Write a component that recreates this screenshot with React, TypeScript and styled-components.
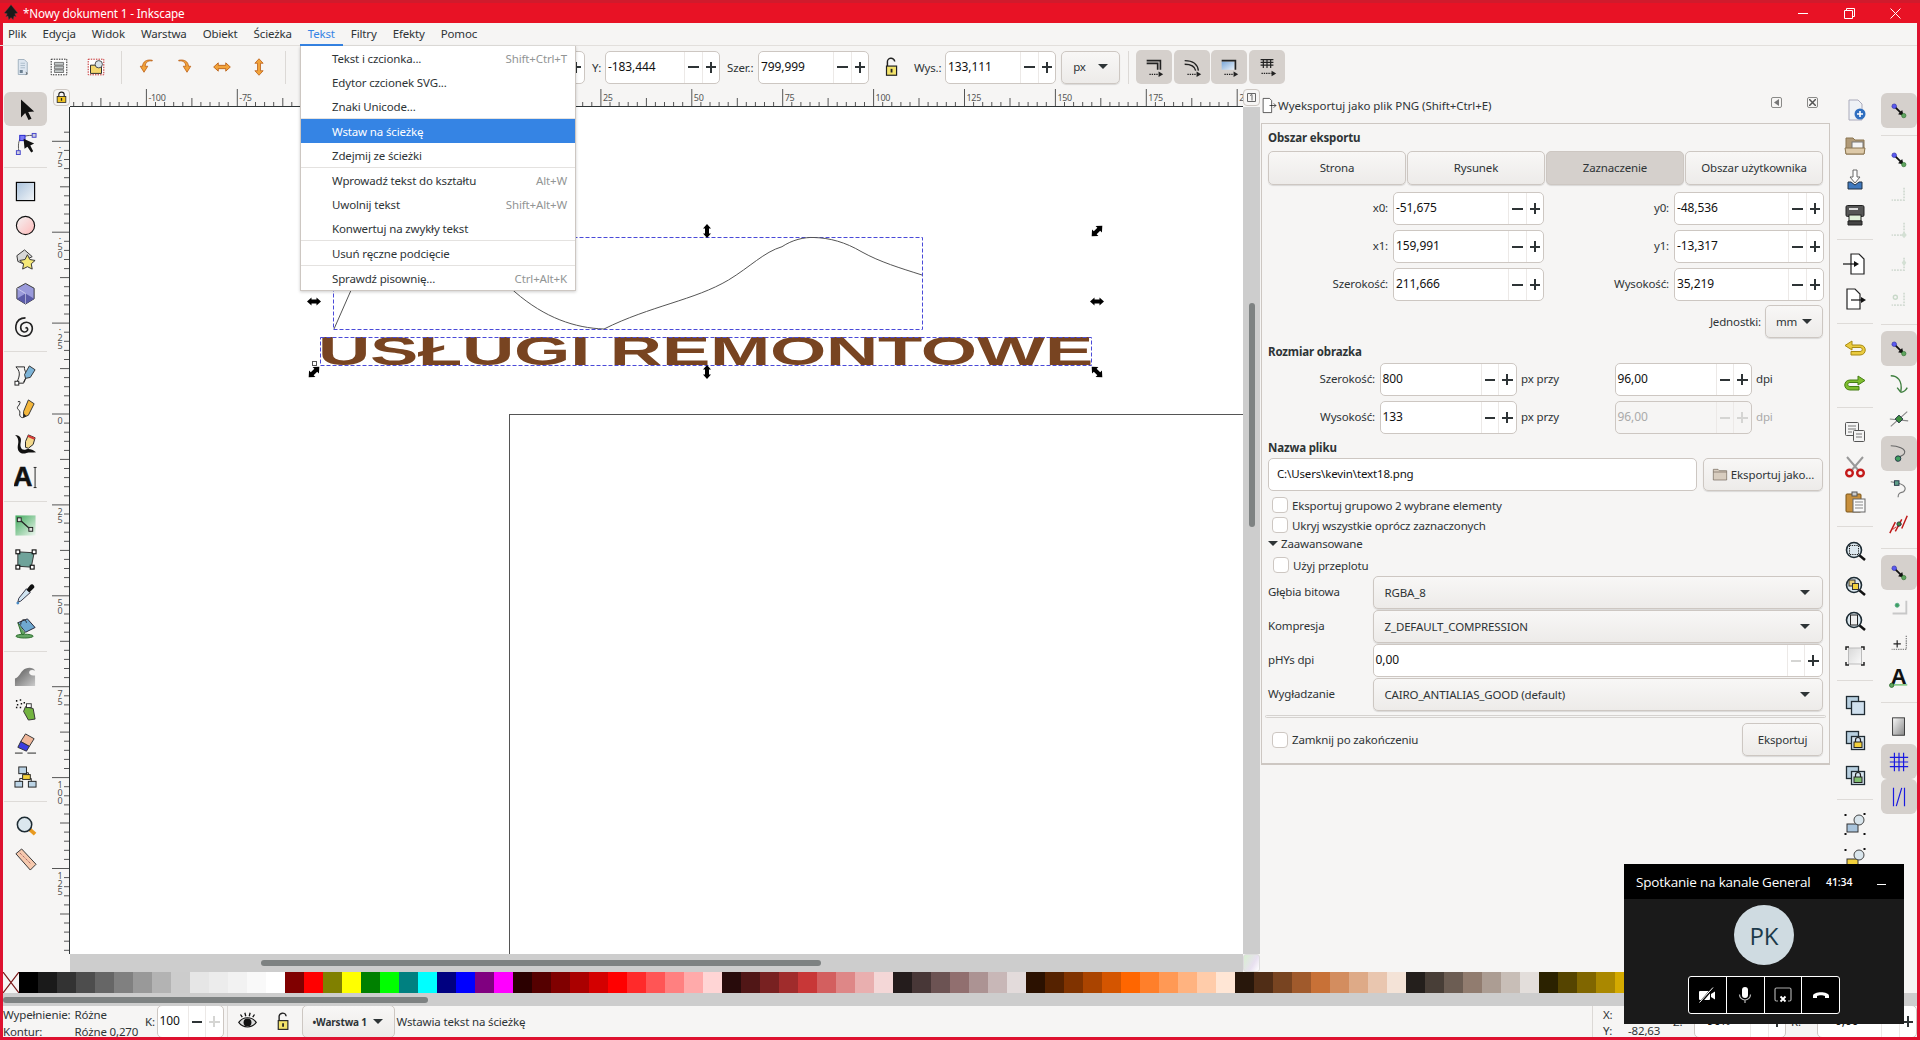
import React, { ReactNode } from 'react';
import styled, { createGlobalStyle } from 'styled-components';

const UI_FONT = `"Noto Sans", "Open Sans", sans-serif`;

const GlobalStyle = createGlobalStyle`
  html, body {
    margin: 0;
    padding: 0;
    width: 1920px;
    height: 1040px;
    overflow: hidden;
    background: #f6f5f4;
  }
  * { box-sizing: border-box; }
`;

const Window = styled.div`
  position: relative;
  width: 1920px;
  height: 1040px;
  display: flex;
  flex-direction: column;
  overflow: hidden;
  background: #f6f5f4;
  color: #2e3436;
  font-family: ${UI_FONT};
  font-size: 11.5px;
  letter-spacing: -0.15px;
`;

const TitleBar = styled.div`
  height: 23px;
  flex: none;
  display: flex;
  align-items: center;
  background: #e81225;
  border-top: 3px solid #d01a2c;
  color: #fff;
  padding: 0 2px;
  font-size: 11.7px;
`;

const TitleText = styled.span`
  margin-left: 3px;
  flex: 1;
`;

const WinControl = styled.div`
  width: 46px;
  display: flex;
  justify-content: center;
`;

const Frame = styled.div`
  flex: 1;
  min-height: 0;
  display: flex;
  flex-direction: column;
  border: 3px solid #de1230;
  border-top: 0;
`;

const MenuBar = styled.div`
  height: 23px;
  flex: none;
  display: flex;
  margin-left: -3px;
  border-bottom: 1px solid #e2dfdc;
`;

const MenuTitle = styled.div<{ $active?: boolean }>`
  padding: 0 8px;
  line-height: 21px;
  height: 23px;
  color: ${(p) => (p.$active ? '#3584e4' : '#2e3436')};
  border-bottom: 2px solid ${(p) => (p.$active ? '#3584e4' : 'transparent')};
`;

const Toolbar = styled.div`
  height: 43px;
  flex: none;
  display: flex;
  align-items: center;
  padding-bottom: 1px;
`;

const TopTool = styled.div<{ $w?: number }>`
  width: ${(p) => p.$w ?? 37}px;
  height: 33px;
  flex: none;
  display: flex;
  align-items: center;
  justify-content: center;
`;

const ToolSep = styled.div<{ $ml?: number; $mr?: number }>`
  width: 1px;
  height: 33px;
  flex: none;
  margin: 0 ${(p) => p.$mr ?? 0}px 0 ${(p) => p.$ml ?? 0}px;
  background: #dcd9d6;
`;

const FieldLabel = styled.span<{ $w: number; $pl?: number }>`
  width: ${(p) => p.$w}px;
  padding-left: ${(p) => p.$pl ?? 0}px;
  flex: none;
  white-space: nowrap;
`;

const Spin = styled.div<{ $w?: number; $h?: number; $disabled?: boolean }>`
  width: ${(p) => (p.$w ? `${p.$w}px` : 'auto')};
  height: ${(p) => p.$h ?? 33}px;
  flex: none;
  display: flex;
  border: 1px solid #cdc7c2;
  border-radius: 5px;
  color: ${(p) => (p.$disabled ? '#aaa' : '#111')};
  background: ${(p) => (p.$disabled ? '#f6f5f4' : '#fff')};
`;

const SpinValue = styled.div<{ $pad?: number }>`
  flex: 1;
  padding-left: ${(p) => p.$pad ?? 2}px;
  line-height: 30px;
  font-size: 12px;
  letter-spacing: -0.1px;
  white-space: nowrap;
  overflow: hidden;
`;

const SpinBtn = styled.div<{ $plus?: boolean; $off?: boolean }>`
  position: relative;
  width: 17.5px;
  flex: none;
  border-left: 1px solid #ece9e7;
  &::before {
    content: '';
    position: absolute;
    left: 3px;
    right: 3px;
    top: 50%;
    height: 2px;
    margin-top: -1px;
    background: ${(p) => (p.$off ? '#d5d5d3' : '#2e3436')};
  }
  &::after {
    content: '';
    display: ${(p) => (p.$plus ? 'block' : 'none')};
    position: absolute;
    top: 50%;
    left: 50%;
    width: 2px;
    height: 11px;
    margin: -5.5px 0 0 -1px;
    background: ${(p) => (p.$off ? '#d5d5d3' : '#2e3436')};
  }
`;

const Button = styled.div<{ $w?: number; $on?: boolean; $ml?: number; $gap?: number }>`
  width: ${(p) => (p.$w ? `${p.$w}px` : 'auto')};
  height: 33px;
  flex: ${(p) => (p.$w ? 'none' : '1')};
  margin-left: ${(p) => p.$ml ?? 0}px;
  padding-bottom: 1px;
  display: flex;
  align-items: center;
  justify-content: center;
  gap: ${(p) => p.$gap ?? 3}px;
  border: 1px solid #cdc7c2;
  border-radius: 5px;
  background: ${(p) => (p.$on ? '#d5d0cc' : 'linear-gradient(#f8f7f6, #edebe9)')};
  box-shadow: 0 1px 1px rgba(0, 0, 0, 0.12);
  white-space: nowrap;
`;

const Arrow = styled.span<{ $ml?: number }>`
  width: 0;
  height: 0;
  margin-left: ${(p) => p.$ml ?? 0}px;
  border-left: 5px solid transparent;
  border-right: 5px solid transparent;
  border-top: 5px solid #2e3436;
`;

const ToggleBtn = styled.div`
  width: 36px;
  height: 34px;
  flex: none;
  margin-right: 1.5px;
  display: flex;
  align-items: center;
  justify-content: center;
  border-radius: 5px;
  background: #d5d0cc;
`;

const Workspace = styled.div`
  height: 883px;
  flex: none;
  display: flex;
`;

const ToolColumn = styled.div<{ $w: number; $top: number; $left?: boolean }>`
  width: ${(p) => p.$w}px;
  flex: none;
  padding-top: ${(p) => p.$top}px;
  padding-left: ${(p) => (p.$left ? 1 : 0)}px;
  display: flex;
  flex-direction: column;
  align-items: ${(p) => (p.$left ? 'flex-start' : 'center')};
`;

const ToolCell = styled.div<{ $w?: number; $h?: number; $on?: boolean }>`
  width: ${(p) => p.$w ?? 43}px;
  height: ${(p) => p.$h ?? 34}px;
  flex: none;
  display: flex;
  align-items: center;
  justify-content: center;
  border-radius: 6px;
  background: ${(p) => (p.$on ? '#d5d0cc' : 'transparent')};
`;

const ToolDivider = styled.div<{ $w?: number; $h?: number }>`
  width: ${(p) => p.$w ?? 43}px;
  height: ${(p) => p.$h ?? 14}px;
  flex: none;
  display: flex;
  align-items: center;
  &::before {
    content: '';
    width: 100%;
    height: 1px;
    background: #dedbd8;
  }
`;

const CanvasArea = styled.div`
  width: 1208px;
  flex: none;
  display: grid;
  grid-template-columns: 18px 1173px 17px;
  grid-template-rows: 18px 847px 18px;
`;

const LockCell = styled.div`
  display: flex;
  align-items: center;
  justify-content: center;
  margin: 0 0 1px 1px;
  border: 1px solid #cdc7c2;
  border-radius: 4px;
`;

const RulerBox = styled.div`
  overflow: hidden;
  svg { display: block; }
`;

const PageCell = styled.div`
  margin: 0 0 1px 0;
  display: flex;
  align-items: center;
  justify-content: center;
  border: 1px solid #cdc7c2;
  border-radius: 4px;
`;

const Canvas = styled.div`
  position: relative;
  background: #fff;
  overflow: hidden;
`;

const PageOutline = styled.div`
  position: absolute;
  left: 439px;
  top: 307px;
  right: 0;
  bottom: 0;
  border-left: 1px solid #555;
  border-top: 1px solid #555;
`;

const Drawing = styled.svg`
  position: absolute;
  left: 0;
  top: 0;
`;

const VScroll = styled.div`
  background: #cdcdcd;
  padding: 196px 0 0 6px;
`;

const VThumb = styled.div`
  width: 6px;
  height: 224px;
  border-radius: 3px;
  background: #7e8282;
`;

const GridBlank = styled.div``;

const HScroll = styled.div`
  background: #cdcdcd;
  padding: 6px 0 0 191px;
`;

const HThumb = styled.div<{ $w: number }>`
  width: ${(p) => p.$w}px;
  height: 6px;
  border-radius: 3px;
  background: #7e8282;
`;

const ColorCorner = styled.div`
  background: linear-gradient(120deg, #d8f0d0, #e8e0f0 60%, #fff);
  border: 1px solid #ddd;
  border-radius: 3px;
`;

const Dock = styled.div`
  width: 570px;
  flex: none;
  display: flex;
  flex-direction: column;
`;

const DockTitle = styled.div`
  height: 34px;
  flex: none;
  display: flex;
  align-items: center;
  padding: 0 10px 2px 1px;
  letter-spacing: -0.05px;
`;

const DockTitleText = styled.span`
  flex: 1;
`;

const DockMini = styled.div<{ $mr?: number }>`
  width: 11px;
  height: 11px;
  flex: none;
  margin: -6px ${(p) => p.$mr ?? 0}px 0 0;
  border: 1px solid #8a8a88;
  border-radius: 2px;
  display: flex;
  align-items: center;
  justify-content: center;
`;

const DockBox = styled.div`
  height: 642px;
  flex: none;
  margin-left: 1px;
  padding: 6px 6px 0 6px;
  border: 1px solid #cdc7c2;
  border-bottom: 2px solid #cdc7c2;
`;

const Heading = styled.div<{ $mt?: number }>`
  height: 16px;
  line-height: 16px;
  margin-top: ${(p) => p.$mt ?? 0}px;
  font-weight: 700;
`;

const SegmentRow = styled.div`
  display: flex;
  gap: 1px;
  margin-top: 5px;
  height: 34px;
  ${Button} {
    height: 34px;
  }
`;

const CoordGrid = styled.div`
  display: grid;
  grid-template-columns: 120px 151px 120px 150px;
  column-gap: 5px;
  row-gap: 5px;
  margin-top: 7px;
`;

const RightLabel = styled.div<{ $dim?: boolean }>`
  text-align: right;
  line-height: 32px;
  color: ${(p) => (p.$dim ? '#aaa' : '#2e3436')};
`;

const UnitsRow = styled.div`
  display: flex;
  align-items: center;
  justify-content: flex-end;
  gap: 4px;
  margin-top: 4px;
`;

const SizeGrid = styled.div`
  display: grid;
  grid-template-columns: 107px 137px 89px 137px auto;
  column-gap: 4.5px;
  row-gap: 5px;
  margin-top: 3px;
`;

const LeftLabel = styled.div<{ $dim?: boolean }>`
  line-height: 32px;
  color: ${(p) => (p.$dim ? '#aaa' : '#2e3436')};
`;

const FileRow = styled.div`
  display: flex;
  gap: 6px;
  margin-top: 2px;
`;

const FileInput = styled.div`
  flex: 1;
  height: 33px;
  padding-left: 8px;
  line-height: 30px;
  background: #fff;
  border: 1px solid #cdc7c2;
  border-radius: 5px;
  color: #111;
`;

const CheckRow = styled.div<{ $mt?: number; $ml?: number }>`
  height: 16px;
  display: flex;
  align-items: center;
  gap: 4px;
  margin: ${(p) => p.$mt ?? 0}px 0 0 ${(p) => p.$ml ?? 4}px;
`;

const CheckBox = styled.span`
  width: 16px;
  height: 16px;
  flex: none;
  background: #fff;
  border: 1px solid #cdc7c2;
  border-radius: 4px;
`;

const Expander = styled.div`
  height: 16px;
  margin-top: 2px;
  display: flex;
  align-items: center;
  gap: 3px;
`;

const OptionGrid = styled.div`
  display: grid;
  grid-template-columns: 104.5px 450px;
  row-gap: 1px;
  margin-top: 3px;
`;

const Select = styled.div`
  height: 33px;
  display: flex;
  align-items: center;
  justify-content: space-between;
  padding: 0 12px 1px 11px;
  border: 1px solid #cdc7c2;
  border-radius: 5px;
  background: linear-gradient(#f8f7f6, #edebe9);
  box-shadow: 0 1px 1px rgba(0, 0, 0, 0.12);
`;

const DockRule = styled.div`
  height: 3px;
  margin: 4px -3px 0 -3px;
  border: 1px solid #d5d2cf;
  border-radius: 2px;
`;

const FinishRow = styled.div`
  display: flex;
  align-items: center;
  justify-content: space-between;
  margin-top: 5px;
  padding-left: 4px;
`;

const Palette = styled.div`
  height: 21px;
  flex: none;
  display: flex;
  overflow: hidden;
`;

const NoColor = styled.div`
  width: 16px;
  flex: none;
  svg { display: block; }
`;

const Swatch = styled.div<{ $c: string }>`
  width: 19px;
  flex: none;
  background: ${(p) => p.$c};
`;

const PaletteScroll = styled.div`
  height: 13px;
  flex: none;
  padding-top: 4px;
  background: #cdcdcd;
`;

const StatusBar = styled.div`
  height: 31px;
  flex: none;
  display: flex;
  align-items: center;
  overflow: hidden;
`;

const StyleInfo = styled.div`
  width: 142px;
  flex: none;
  display: grid;
  grid-template-columns: 71.5px auto;
  line-height: 17px;
  margin-top: 2px;
`;

const StatusSep = styled.div<{ $ml?: number }>`
  width: 1px;
  height: 31px;
  flex: none;
  margin-left: ${(p) => p.$ml ?? 0}px;
  background: #dcd9d6;
`;

const StatusIcon = styled.div<{ $w: number }>`
  width: ${(p) => p.$w}px;
  flex: none;
  display: flex;
  justify-content: center;
`;

const LayerCombo = styled.div`
  width: 93px;
  height: 33px;
  flex: none;
  display: flex;
  align-items: center;
  padding-left: 10px;
  font-size: 10px;
  font-weight: 700;
  border: 1px solid #cdc7c2;
  border-radius: 5px;
  background: linear-gradient(#f8f7f6, #edebe9);
  margin-left: 2px;
`;

const StatusText = styled.div`
  flex: 1;
  padding-left: 2px;
  white-space: nowrap;
`;

const CoordInfo = styled.div`
  width: 80px;
  flex: none;
  display: grid;
  grid-template-columns: 25px auto;
  padding-left: 10px;
  line-height: 16px;
  margin-top: 2px;
`;

const Dropdown = styled.div`
  position: absolute;
  left: 300px;
  top: 46px;
  width: 276px;
  height: 245px;
  background: #fff;
  border: 1px solid #cdc7c2;
  border-top: 0;
  box-shadow: 0 1px 3px rgba(0, 0, 0, 0.2);
`;

const DropItem = styled.div<{ $on?: boolean }>`
  height: 24px;
  display: flex;
  align-items: center;
  justify-content: space-between;
  padding: 0 8px 0 31px;
  background: ${(p) => (p.$on ? '#3584e4' : 'transparent')};
  color: ${(p) => (p.$on ? '#fff' : '#2e3436')};
`;

const Shortcut = styled.span`
  color: #929595;
`;

const DropSep = styled.div`
  height: 1px;
  background: #e4e2e0;
`;

const Meeting = styled.div`
  position: absolute;
  left: 1624px;
  top: 864px;
  width: 280px;
  height: 160px;
  display: flex;
  flex-direction: column;
  background: #1a1a1a;
  color: #fff;
`;

const MeetingHead = styled.div`
  height: 35px;
  flex: none;
  display: flex;
  align-items: center;
  padding-left: 12px;
  background: #000;
  font-family: "Open Sans", sans-serif;
`;

const MeetingTitle = styled.span`
  width: 190px;
  flex: none;
  font-size: 13.5px;
  letter-spacing: -0.2px;
  white-space: nowrap;
`;

const MeetingTime = styled.span`
  font-size: 10.5px;
  font-weight: 600;
  letter-spacing: -0.1px;
`;

const MeetingHide = styled.span`
  width: 9px;
  height: 1px;
  margin: 6px 0 0 25px;
  background: #fff;
`;

const Avatar = styled.div`
  width: 60px;
  height: 60px;
  margin: 6px auto 0;
  border-radius: 50%;
  background: #cfdbe1;
  color: #1c3a4a;
  display: flex;
  align-items: center;
  justify-content: center;
  font-family: "Open Sans", sans-serif;
  font-size: 24px;
  letter-spacing: 0;
`;

const CallBar = styled.div`
  width: 152px;
  height: 38px;
  margin: 11px 0 0 64px;
  display: flex;
  background: #000;
  border: 1px solid #fff;
  border-radius: 3px;
`;

const CallBtn = styled.div`
  flex: 1;
  display: flex;
  align-items: center;
  justify-content: center;
  & + & { border-left: 1px solid #fff; }
`;

const Ico = ({ children, s = 24 }: { children: ReactNode; s?: number }) => (
  <svg width={s} height={s} viewBox="0 0 24 24">{children}</svg>
);

const grad = (id: string, a: string, b: string) => (
  <defs>
    <linearGradient id={id} x1="0" y1="0" x2="1" y2="1">
      <stop offset="0" stopColor={a} />
      <stop offset="1" stopColor={b} />
    </linearGradient>
  </defs>
);

const Magnifier = () => <circle cx="11" cy="11" r="7.5" fill="#dbe7ee" stroke="#1d2b33" strokeWidth="1.6" />;

const DocShape = ({ x = 0 }: { x?: number }) => (
  <path transform={`translate(${x} 0)`} d="M6 2h8l5 5v15H6z" fill="#fff" stroke="#222" strokeWidth="1.2" />
);

const Flat = ({ d, f, s }: { d: string; f: string; s: string }) => <path d={d} fill={f} stroke={s} strokeWidth="1" strokeLinejoin="round" />;

const NodeArrow = () => (
  <>
    <path d="M7 7l8.5 8.5" stroke="#111" strokeWidth="2" />
    <path d="M17 17l-6-1.5 4.500-4.500z" fill="#111" />
    <circle cx="6.800" cy="6.800" r="2.500" fill="#5a5af0" stroke="#3030a0" strokeWidth="0.7" />
    <circle cx="17.200" cy="17" r="2.400" fill="#5fa45f" stroke="#2f6f2f" strokeWidth="0.7" />
  </>
);

const FaintBox = ({ extra }: { extra?: ReactNode }) => (
  <>
    <path d="M17.5 4v13.5H4" fill="none" stroke="#d4dcd4" strokeWidth="2" strokeDasharray="2 1.2" />
    {extra}
  </>
);

const Sheets = ({ front = '#cfe0ee', extra }: { front?: string; extra?: ReactNode }) => (
  <>
    <rect x="3.5" y="3.5" width="12" height="12" fill="#b7cfe0" stroke="#1f2b33" strokeWidth="1.3" />
    <rect x="8.5" y="8.5" width="13" height="13" fill={front} stroke="#1f2b33" strokeWidth="1.3" />
    {extra}
  </>
);

const MiniLock = ({ c }: { c: string }) => (
  <>
    <path d="M12.5 14v-2a2.5 2.5 0 0 1 5 0v2" fill="none" stroke="#222" strokeWidth="1.2" />
    <rect x="11" y="14" width="8" height="5.5" fill={c} stroke="#222" strokeWidth="1" />
  </>
);

const icons: Record<string, ReactNode> = {
  logo: <path d="M12 1l4 5 5 6-4 1 2 4-3-1-1 5-3-3-3 3-1-5-3 1 2-4-4-1 5-6z" fill="#1a1a1a" stroke="#555" strokeWidth=".5" />,
  selectAll: (
    <>
      <path d="M7 2h8l4 4v16H7z" fill="#dde6f0" stroke="#8da0b0" />
      <rect x="9" y="16" width="4" height="4" fill="#6b7f90" />
      <path d="M10 7h6M10 10h6M10 13h6" stroke="#9fb2c2" />
      <path d="M17 19l2 1.500-2 1.500" stroke="#333" fill="none" />
    </>
  ),
  selectLayers: (
    <>
      <rect x="3.5" y="3.5" width="17" height="17" fill="#fff" stroke="#111" strokeDasharray="1.6 1.2" />
      <path d="M7 7h10v3H7zM7 11h10v3H7zM7 15h10v3H7z" fill="#c6cccc" stroke="#555" strokeWidth=".8" />
    </>
  ),
  selectSame: (
    <>
      <rect x="3.5" y="3.5" width="17" height="17" fill="#fff" stroke="#c01818" strokeDasharray="1.6 1.2" />
      <path d="M6 10h6l2 2h4v7H6z" fill="#f3d66c" stroke="#222" />
      <circle cx="15" cy="9" r="4" fill="#d7e3ea" stroke="#444" />
    </>
  ),
  rotL: <Flat d="M19 4c-6-1-9 2-9.500 7H13l-5 8-5-8h3C6.500 5 11 1.500 19 3z" f="#f2a33a" s="#b85a10" />,
  rotR: <Flat d="M5 4c6-1 9 2 9.500 7H11l5 8 5-8h-3C17.500 5 13 1.500 5 3z" f="#f2a33a" s="#b85a10" />,
  flipH: <Flat d="M2 12l5.500-5v3h9V7l5.500 5-5.500 5v-3h-9v3z" f="#f2a33a" s="#b85a10" />,
  flipV: <Flat d="M12 1l5.500 6H14v10h3.500L12 23l-5.500-6H10V7H6.500z" f="#f2a33a" s="#b85a10" />,
  lockOpen: (
    <>
      <path d="M7 11V7a4 4 0 0 1 8-1" fill="none" stroke="#222" strokeWidth="1.6" />
      <rect x="6" y="11" width="11" height="10" fill="#f3e36a" stroke="#222" strokeWidth="1.3" />
      <rect x="10.500" y="14" width="2" height="4" fill="#222" />
    </>
  ),
  lockClosed: (
    <>
      <path d="M7 11V7a5 5 0 0 1 10 0v4" fill="none" stroke="#222" strokeWidth="2" />
      <rect x="4" y="10" width="16" height="11" fill="#f3c623" stroke="#222" strokeWidth="1.5" />
      <rect x="10.800" y="13" width="2.400" height="5" fill="#222" />
    </>
  ),
  scale1: (
    <>
      <path d="M4 5h15v10M4 8h12v7" fill="none" stroke="#222" strokeWidth="1.8" />
      <path d="M7 20h10" stroke="#222" strokeWidth="1.3" strokeDasharray="1.5 1" />
      <path d="M22 20l-5-3v6z" fill="#222" />
    </>
  ),
  scale2: (
    <>
      <path d="M4 5c9 0 14 3 15 11M4 9c6 0 11 2 12 7" fill="none" stroke="#222" strokeWidth="1.5" />
      <path d="M7 20h10" stroke="#222" strokeWidth="1.3" strokeDasharray="1.5 1" />
      <path d="M22 20l-5-3v6z" fill="#222" />
    </>
  ),
  scale3: (
    <>
      {grad('sc3', '#7aa7d8', '#e8f0f8')}
      <rect x="4" y="6" width="14" height="9" fill="url(#sc3)" />
      <path d="M4 5h15v10" fill="none" stroke="#222" strokeWidth="1.8" />
      <path d="M7 20h10" stroke="#222" strokeWidth="1.3" strokeDasharray="1.5 1" />
      <path d="M22 20l-5-3v6z" fill="#222" />
    </>
  ),
  scale4: (
    <>
      <path d="M5 4h14M5 7h14M5 10h14M8 4v9M12 4v9M16 4v9" fill="none" stroke="#222" strokeWidth="1.3" />
      <path d="M6 19h11" stroke="#222" strokeWidth="1.3" strokeDasharray="1.5 1" />
      <path d="M22 19l-5-3v6z" fill="#222" />
    </>
  ),
  selector: <path d="M7 2.500v18l4.200-4.500 3.300 7 3-1.300-3.300-6.700 6-.5z" fill="#111" />,
  node: (
    <>
      <path d="M5 20c-1-8 0-13 4-15 3-1 6-1.500 10-1.500" fill="none" stroke="#555" />
      <rect x="6" y="3.500" width="5.500" height="5.500" fill="#7a7af5" stroke="#2222cc" />
      <rect x="19" y="1.500" width="4" height="4" fill="#ccd" stroke="#44c" />
      <rect x="2.500" y="19.500" width="4" height="4" fill="#ccd" stroke="#44c" />
      <path d="M10 7l11 5-4 2 3 6-2 1.500-4-6-3 2z" fill="#111" />
    </>
  ),
  rect: (
    <>
      {grad('rc', '#a9c2dc', '#f2f5f8')}
      <rect x="2.500" y="2.500" width="19" height="19" fill="url(#rc)" stroke="#000" strokeWidth="1.2" />
    </>
  ),
  ellipse: (
    <>
      {grad('el', '#f4f4f4', '#ffb9b9')}
      <circle cx="12" cy="12" r="9.500" fill="url(#el)" stroke="#111" strokeWidth="1.2" />
    </>
  ),
  star: (
    <>
      <path d="M3 8l8-6 8 7-6 3-2 5-7-3z" fill="#d8d8d8" stroke="#333" />
      <path d="M14 7l2.500 5 5.500 1-4 3.500 1 5.500-5-2.500-5 2.500 1-5.500-4-3.500 5.500-1z" fill="#f6e977" stroke="#333" />
    </>
  ),
  box3d: (
    <>
      <path d="M12 1.500l9 5v11l-9 5.500-9-5.500v-11z" fill="#9a9adb" stroke="#333" />
      <path d="M12 12l9 5.500-9 5.500-9-5.500z" fill="#5b5ba8" />
      <path d="M12 12L3 6.500M12 12v11" stroke="#fff" strokeWidth=".5" />
    </>
  ),
  spiral: (
    <path d="M12 13c1-2 3 0 2 2-2 3-7 2-7-3 0-5 6-7 10-4 4 4 2 12-5 13C6 22 1 17 2 10 3 5 7 2 12 2" fill="none" stroke="#222" strokeWidth="1.7" />
  ),
  pen: (
    <>
      <path d="M2 3h9c-1 5 5 6-1 17" fill="none" stroke="#222" />
      <path d="M2 3c4 4 5 8 1 16" fill="none" stroke="#222" />
      <rect x="1" y="18" width="4" height="4" fill="#fff" stroke="#222" />
      <path d="M5 20h5" stroke="#222" />
      <path d="M16 2l6 4-5 8-5 1-1-4z" fill="#7db4d8" stroke="#333" />
      <path d="M12 15l-2 4" stroke="#222" />
    </>
  ),
  pencil: (
    <>
      <path d="M4 4c4-2 2 3 0 5-2 3 3 3 2 7-1 5 5 6 6 2" fill="none" stroke="#222" />
      <path d="M15 2l6 4-6 12-5 2 0-6z" fill="#f4b73c" stroke="#333" />
      <path d="M10 20l0-4 3 3z" fill="#222" />
    </>
  ),
  calli: (
    <>
      <path d="M1 3c6 0 7 4 6 8-1 5 1 9 6 7 3-1 6 0 10 3-4 1-7 0-10 1-6 2-10-2-9-8 1-4 1-8-3-11z" fill="#111" />
      <path d="M15 3l7 3-2 7-5 4-3-1 0-6z" fill="#f3d98b" stroke="#222" />
      <path d="M15 3l7 3-1 2-7-3z" fill="#d63a3a" />
    </>
  ),
  text: (
    <>
      <text x="-1" y="21" fontFamily="Liberation Sans" fontWeight="700" fontSize="28" fill="#111" stroke="#111" strokeWidth=".6">A</text>
      <path d="M20.500 1.500h3M22 1.500v21M20.500 22.500h3" stroke="#222" fill="none" />
    </>
  ),
  gradient: (
    <>
      {grad('gr', '#3fa95c', '#eef6ef')}
      <rect x="1.500" y="1.500" width="21" height="21" fill="url(#gr)" />
      <path d="M6 6l11 10" stroke="#222" strokeWidth="1.3" />
      <rect x="3.500" y="4" width="4" height="4" fill="#ddd" stroke="#222" />
      <rect x="15.500" y="14" width="4" height="4" fill="#ddd" stroke="#222" />
    </>
  ),
  mesh: (
    <>
      <path d="M4 4l17 1-3 15-14-1z" fill="#6fa39a" stroke="#333" />
      <rect x="2" y="2" width="4" height="4" fill="#fff" stroke="#111" strokeWidth="1.2" />
      <rect x="19" y="2" width="4" height="4" fill="#fff" stroke="#111" strokeWidth="1.2" />
      <rect x="2" y="18" width="4" height="4" fill="#fff" stroke="#111" strokeWidth="1.2" />
      <rect x="17" y="18" width="4" height="4" fill="#fff" stroke="#111" strokeWidth="1.2" />
    </>
  ),
  dropper: (
    <>
      <path d="M13 7l4 4-10 9-3 1 1-4z" fill="#cfe3f0" stroke="#334" />
      <path d="M13 8l4-5c2-2 5 1 4 3l-5 5z" fill="#111" />
      <circle cx="4" cy="22" r="1.500" fill="#4a8cc5" />
    </>
  ),
  bucket: (
    <>
      <ellipse cx="11" cy="21" rx="9" ry="2" fill="#63a563" stroke="#2d6e2d" />
      <path d="M4 7l10-4 8 9-10 5z" fill="#6fa8d0" stroke="#223" />
      <path d="M4 7l4 12c2 1 3 0 3-2" fill="#63a563" stroke="#2d6e2d" />
      <path d="M7 9c0-6 5-7 6-2" fill="none" stroke="#222" />
    </>
  ),
  tweak: (
    <>
      {grad('tw', '#555', '#ccc')}
      <path d="M1 23v-8c4-1 5-5 8-8 4-4 11-4 13 0-4-2-7 0-6 3 1 2 3 2 6 2v11z" fill="url(#tw)" />
    </>
  ),
  spray: (
    <>
      <path d="M12 9l8 2 2 11-7 1-5-9z" fill="#73b340" stroke="#333" />
      <rect x="13" y="6" width="5" height="4" fill="#fff" stroke="#333" />
      <path d="M2 3h1.500M6 2h1.500M3 7h1.500M7 6h1.500M10 5h1.500M2 10h1.500M6 10h1.500" stroke="#111" strokeWidth="1.6" />
    </>
  ),
  eraser: (
    <>
      <path d="M12 2l9 5-5 8-9-5z" fill="#f0b79a" stroke="#333" />
      <path d="M7 10l9 5-3 5-9-4z" fill="#3d3de0" stroke="#333" />
      <path d="M1 22h8M14 22h9" stroke="#222" />
    </>
  ),
  connector: (
    <>
      <path d="M9 7h6v7M6 16v-3h9M18 16v-3h-3" fill="none" stroke="#222" />
      <rect x="5" y="1" width="8" height="7" fill="#bcd4e6" stroke="#222" />
      <rect x="9" y="9" width="8" height="5" fill="#f3d13c" stroke="#222" />
      <rect x="1" y="16" width="8" height="6" fill="#bcd4e6" stroke="#222" />
      <rect x="15" y="16" width="8" height="6" fill="#bcd4e6" stroke="#222" />
    </>
  ),
  zoom: (
    <>
      <path d="M14 14l8 7" stroke="#e89a20" strokeWidth="4" />
      <Magnifier />
    </>
  ),
  measure: (
    <>
      <path d="M2 6l6-5 15 16-6 6z" fill="#f6c9ae" stroke="#333" />
      <path d="M6 5l2 2M9 8l2 2M12 11l2 2M15 14l2 2" stroke="#a66" />
    </>
  ),
  newDoc: (
    <>
      <path d="M6 2h9l4 4v16H6z" fill="#eef2f6" stroke="#aab" />
      <circle cx="17" cy="16" r="5.500" fill="#2f6fc0" />
      <path d="M14 16h6M17 13v6" stroke="#fff" strokeWidth="1.6" />
    </>
  ),
  open: (
    <>
      <path d="M3 5h7l2 2h9v14H3z" fill="#b09a78" stroke="#8a7550" />
      <rect x="9" y="9" width="11" height="7" fill="#f4f4f4" stroke="#777" />
      <path d="M2 15h20l-1 6H3z" fill="#ddc9a8" stroke="#8a7550" />
    </>
  ),
  save: (
    <>
      <path d="M10 2h4v7h3l-5 6-5-6h3z" fill="#fff" stroke="#666" />
      <path d="M5 14h3l4 3 4-3h3v7H5z" fill="#3f78bd" stroke="#234" />
    </>
  ),
  print: (
    <>
      <rect x="3" y="2.500" width="18" height="11" rx="1.500" fill="#555" stroke="#222" />
      <rect x="6" y="5" width="9" height="2" fill="#ddd" />
      <rect x="6" y="12" width="12" height="6" fill="#dff0d8" stroke="#222" />
      <path d="M5 18h14v4H5z" fill="#444" stroke="#222" />
    </>
  ),
  import: (
    <>
      <DocShape x={2} />
      <path d="M0 12h14" stroke="#111" strokeWidth="1.2" />
      <path d="M16 12l-5-3v6z" fill="#111" />
    </>
  ),
  export: (
    <>
      <DocShape x={-2} />
      <path d="M8 13h12" stroke="#111" strokeWidth="1.2" />
      <path d="M23 13l-5-3v6z" fill="#111" />
    </>
  ),
  undo: <Flat d="M9 5L2 9.500 9 14v-2.500h8c3 0 3 4 0 4H8v3.500h9c7 0 7-10 0-10H9z" f="#eacb3f" s="#a88a12" />,
  redo: <Flat d="M15 5l7 4.500-7 4.500v-2.500H7c-3 0-3 4 0 4h9v3.500H7c-7 0-7-10 0-10h8z" f="#7fbe2e" s="#467f14" />,
  copy: (
    <>
      <rect x="2.500" y="2.500" width="13" height="13" rx="1" fill="#f4f4f4" stroke="#555" />
      <path d="M5 6h8M5 9h8M5 12h4" stroke="#777" />
      <rect x="10.500" y="10.500" width="11" height="11" rx="1" fill="#f4f4f4" stroke="#555" />
      <path d="M13 14h6M13 17h6" stroke="#777" />
    </>
  ),
  cut: (
    <>
      <path d="M4 2l12 14M20 2L8 16" stroke="#999" strokeWidth="2" />
      <circle cx="6.500" cy="18" r="3.300" fill="none" stroke="#c41a1a" strokeWidth="2.400" />
      <circle cx="17.500" cy="18" r="3.300" fill="none" stroke="#c41a1a" strokeWidth="2.400" />
    </>
  ),
  paste: (
    <>
      <rect x="3" y="4" width="15" height="18" rx="1" fill="#c78f3c" stroke="#7a5418" />
      <rect x="9" y="2" width="5" height="4" fill="#ccc" stroke="#555" />
      <rect x="10" y="9" width="12" height="13" fill="#fafafa" stroke="#666" />
      <path d="M12 12h8M12 15h8M12 18h8" stroke="#888" />
    </>
  ),
  zoomSel: (
    <>
      <path d="M16 16l6 5" stroke="#111" strokeWidth="2.500" />
      <Magnifier />
      <rect x="6.500" y="6.500" width="9" height="9" fill="none" stroke="#222" strokeDasharray="1.300 1" />
    </>
  ),
  zoomDraw: (
    <>
      <path d="M16 16l6 5" stroke="#111" strokeWidth="2.500" />
      <Magnifier />
      <rect x="6" y="6" width="6" height="6" fill="#e8d07a" stroke="#333" />
      <rect x="9.500" y="9.500" width="6" height="6" fill="#f3d13c" stroke="#333" />
    </>
  ),
  zoomPage: (
    <>
      <path d="M16 16l6 5" stroke="#111" strokeWidth="2.500" />
      <Magnifier />
      <rect x="7.500" y="6" width="7" height="10" fill="#eee" stroke="#222" />
    </>
  ),
  zoomBorder: (
    <>
      {grad('zb', '#d8d8d8', '#fafafa')}
      <rect x="5.500" y="4" width="13" height="16" fill="url(#zb)" stroke="#bbb" />
      <path d="M3 6V3h3M18 3h3v3M21 18v3h-3M6 21H3v-3" fill="none" stroke="#222" strokeWidth="1.500" />
    </>
  ),
  dup: <Sheets />,
  clone: <Sheets front="#d6e5f0" extra={<MiniLock c="#f3d13c" />} />,
  unlink: <Sheets front="#d6e5f0" extra={<MiniLock c="#7fbe6e" />} />,
  selOrig: (
    <>
      <rect x="4" y="12" width="11" height="8" fill="#a9c4dc" stroke="#333" />
      <circle cx="16" cy="8" r="5" fill="#d9e5ec" stroke="#444" />
      <path d="M1.500 3h2M20.500 2h2M1.500 22h2M20.500 22h2" stroke="#111" strokeWidth="2" />
    </>
  ),
  selOrig2: (
    <>
      <rect x="4" y="12" width="11" height="8" fill="#f3d13c" stroke="#333" />
      <circle cx="16" cy="8" r="5" fill="#d9e5ec" stroke="#444" />
      <path d="M1.500 3h2M20.500 2h2" stroke="#111" strokeWidth="2" />
    </>
  ),
  snapMain: <NodeArrow />,
  faint1: <FaintBox />,
  faint2: <FaintBox extra={<path d="M17.500 14l3 3.500-3 3.500-3-3.500z" fill="#d4e0d4" />} />,
  faint3: <FaintBox extra={<path d="M17.500 6l2.500 3.500-2.500 3.500-2.500-3.500z" fill="#d4e0d4" />} />,
  faint4: <FaintBox extra={<circle cx="8" cy="9" r="2.200" fill="none" stroke="#c8d8c8" strokeWidth="1.500" />} />,
  curveArrow: (
    <>
      <path d="M3 3c7 0 13 5 11 17" fill="none" stroke="#3f7f3f" strokeWidth="1.500" />
      <path d="M14 21l-4-5M14 21c3 0 6-3 7-5" fill="none" stroke="#3f7f3f" strokeWidth="1.500" />
    </>
  ),
  cross: (
    <>
      <path d="M3 20L21 4M2 12l20 2" stroke="#888" strokeWidth="1.300" />
      <rect x="9" y="9" width="6" height="6" transform="rotate(45 12 12)" fill="#3f8f3f" stroke="#234" />
    </>
  ),
  curveNode: (
    <>
      <path d="M3 3c7 0 17 3 15 8-1 4-7 2-8 9" fill="none" stroke="#666" strokeWidth="1.200" />
      <circle cx="11" cy="17" r="3" fill="#3f9f5f" stroke="#234" />
    </>
  ),
  curveSq: (
    <>
      <path d="M3 4l5 1c10 2 13 6 9 10-3 1-6 1-6 6" fill="none" stroke="#777" strokeWidth="1.200" />
      <rect x="7" y="3" width="5" height="5" fill="#5fa08a" stroke="#234" />
    </>
  ),
  slash: (
    <>
      <path d="M2 22L8 10M8 20l7-13M15 17L21 3" stroke="#c01818" strokeWidth="1.600" />
      <path d="M5 18l4-3M11 15l4-3" stroke="#c01818" strokeWidth="1" />
      <circle cx="12" cy="12" r="2.300" fill="#3f8f3f" stroke="#234" />
    </>
  ),
  cornerNode: (
    <>
      <path d="M20 4v14H5" fill="none" stroke="#c8c8c8" strokeWidth="2" />
      <circle cx="10" cy="9" r="2.200" fill="#3f9f5f" stroke="#5a8" />
    </>
  ),
  plusBox: (
    <>
      <path d="M6 13h8M10 9v8" stroke="#222" strokeWidth="1.300" />
      <path d="M20 4v15H4" fill="none" stroke="#888" strokeWidth="1.500" strokeDasharray="1.500 1" />
    </>
  ),
  textSnap: (
    <>
      <text x="3" y="19" fontFamily="Liberation Sans" fontWeight="700" fontSize="24" fill="#111">A</text>
      <path d="M3 19.500h18" stroke="#6fbf6f" strokeWidth="1.500" />
      <circle cx="4" cy="20" r="2.300" fill="#5fa45f" stroke="#2f6f2f" />
    </>
  ),
  pageSnap: (
    <>
      {grad('ps', '#fafafa', '#888')}
      <rect x="5" y="2" width="13" height="19" fill="url(#ps)" stroke="#333" />
    </>
  ),
  grid: <path d="M2 7h20M2 12h20M2 17h20M7 2v20M12 2v20M17 2v20" stroke="#1a1ae0" strokeWidth="1.300" fill="none" />,
  guides: <path d="M6 2v20M18 2v20M9 22L15 2" stroke="#1a1ae0" strokeWidth="1.300" fill="none" />,
  dockDoc: (
    <>
      <path d="M3 2h9l3 3v17H3z" fill="#fff" stroke="#222" />
      <path d="M12 12h9M18 9l3 3-3 3" fill="none" stroke="#111" />
    </>
  ),
  folder: (
    <>
      <path d="M2 5h7l2 2h11v14H2z" fill="#d8cdbf" stroke="#6f6557" />
      <path d="M2 9h20" stroke="#6f6557" />
    </>
  ),
  eye: (
    <>
      <path d="M2 13c5-7 15-7 20 0-5 7-15 7-20 0z" fill="#ddd" stroke="#111" strokeWidth="1.300" />
      <circle cx="12" cy="13" r="4.500" fill="#111" />
      <path d="M6 7L4 4M10 6l-1-4M14 6l1-4M18 7l2-3" stroke="#111" strokeWidth="1.500" />
    </>
  ),
};

const Icon = ({ n, s }: { n: string; s?: number }) => <Ico s={s}>{icons[n]}</Ico>;

const SpinBox = ({ value, w, h, disabled, minusOff, plusOff, pad }: { value: string; w?: number; h?: number; disabled?: boolean; minusOff?: boolean; plusOff?: boolean; pad?: number }) => (
  <Spin $w={w} $h={h} $disabled={disabled}>
    <SpinValue $pad={pad}>{value}</SpinValue>
    <SpinBtn $off={disabled || minusOff} />
    <SpinBtn $plus $off={disabled || plusOff} />
  </Spin>
);

const TopRuler = () => {
  const marks: ReactNode[] = [];
  for (let i = -70; i <= 81; i++) {
    const x = 510 + i * 9.09;
    const major = i % 10 === 0;
    const mid = i % 5 === 0;
    const y = major ? 89 : mid ? 98 : 102;
    marks.push(<path key={i} d={`M${x.toFixed(1)} ${y}V106`} stroke="#555" />);
    if (major && x > 60) {
      marks.push(
        <text key={`t${i}`} x={x + 2} y={101} fontSize="9" fill="#555" fontFamily="Noto Sans" letterSpacing="-0.3">
          {i * 2.5}
        </text>
      );
    }
  }
  return (
    <svg width="1173" height="18" viewBox="70 89 1173 18">
      {marks}
      <path d="M70 106.500H1243" stroke="#2e3436" />
    </svg>
  );
};

const LeftRuler = () => {
  const marks: ReactNode[] = [];
  for (let i = -31; i <= 60; i++) {
    const y = 414 + i * 9.09;
    const major = i % 10 === 0;
    const mid = i % 5 === 0;
    const x = major ? 52 : mid ? 60 : 64;
    marks.push(<path key={i} d={`M${x} ${y.toFixed(1)}H69`} stroke="#555" />);
    if (major) {
      String(i * 2.5).split('').forEach((c, k) => {
        marks.push(
          <text key={`${i}-${k}`} x={60} y={y + 10 + k * 8} textAnchor="middle" fontSize="9" fill="#555" fontFamily="Noto Sans">
            {c === '-' ? '·' : c}
          </text>
        );
      });
    }
  }
  return (
    <svg width="18" height="847" viewBox="52 107 18 847">
      {marks}
      <path d="M69.500 107V954" stroke="#2e3436" />
    </svg>
  );
};

const ArrowV = ({ x, y }: { x: number; y: number }) => (
  <path transform={`translate(${x} ${y})`} d="M0-7l4 4.500H2v5h2L0 7l-4-4.500h2v-5h-2z" fill="#000" />
);
const ArrowH = ({ x, y }: { x: number; y: number }) => (
  <path transform={`translate(${x} ${y}) rotate(90)`} d="M0-7l4 4.500H2v5h2L0 7l-4-4.500h2v-5h-2z" fill="#000" />
);
const ArrowD = ({ x, y, r }: { x: number; y: number; r: number }) => (
  <path transform={`translate(${x} ${y}) rotate(${r})`} d="M0-7.500l4.500 5H2v5h2.500L0 7.500l-4.500-5H-2v-5h-2.500z" fill="#000" />
);

const Artwork = () => (
  <Drawing width="1173" height="847" viewBox="70 107 1173 847">
    <rect x="333.500" y="237.500" width="589" height="92" fill="none" stroke="#4a4ad8" strokeDasharray="4 2" />
    <path d="M334 329L352 288C400 230 480 260 515 292C545 318 575 328 604 329C650 306 695 300 728.500 280C750 267 764 252 782 246.700C792 240 804 237 814 237.500C830 238 845 242 862 252C880 262 900 268 922 275" fill="none" stroke="#555" strokeWidth="1" />
    <text x="318" y="365" fontFamily="Liberation Sans" fontWeight="700" fontSize="40" fill="#784421" textLength="775" lengthAdjust="spacingAndGlyphs">USŁUGI REMONTOWE</text>
    <rect x="320.500" y="337.500" width="771" height="28" fill="none" stroke="#4a4ad8" strokeDasharray="4 2" />
    <ArrowV x={707} y={231} />
    <ArrowV x={707} y={372} />
    <ArrowH x={314} y={301.500} />
    <ArrowH x={1097} y={301.500} />
    <ArrowD x={1097} y={231} r={45} />
    <ArrowD x={1097} y={372} r={-45} />
    <ArrowD x={314} y={372} r={45} />
    <rect x="312.500" y="361.500" width="4" height="4" fill="#fff" stroke="#555" />
  </Drawing>
);

const greys = ['#000000', '#1a1a1a', '#333333', '#4d4d4d', '#666666', '#808080', '#999999', '#b3b3b3', '#cccccc', '#e6e6e6', '#ececec', '#f2f2f2', '#f9f9f9', '#ffffff'];
const basics = ['#800000', '#ff0000', '#808000', '#ffff00', '#008000', '#00ff00', '#008080', '#00ffff', '#000080', '#0000ff', '#800080', '#ff00ff'];
const reds = ['#2b0000', '#550000', '#800000', '#aa0000', '#d40000', '#ff0000', '#ff2a2a', '#ff5555', '#ff8080', '#ffaaaa', '#ffd5d5'];
const roses = ['#280b0b', '#501616', '#782121', '#a02c2c', '#c83737', '#d35f5f', '#de8787', '#e9afaf', '#f4d7d7'];
const mauves = ['#241c1c', '#483737', '#6c5353', '#916f6f', '#ac9393', '#c8b7b7', '#e3dbdb'];
const oranges = ['#2b1100', '#552200', '#803300', '#aa4400', '#d45500', '#ff6600', '#ff7f2a', '#ff9955', '#ffb380', '#ffccaa', '#ffe6d5'];
const browns = ['#28170b', '#502d16', '#784421', '#a05a2c', '#c87137', '#d38d5f', '#deaa87', '#e9c6af', '#f4e3d7'];
const taupes = ['#241f1c', '#483e37', '#6c5d53', '#917c6f', '#ac9d93', '#c8beb7', '#e3dedb'];
const golds = ['#2b2200', '#554400', '#806600', '#aa8800', '#d4aa00', '#ffcc00'];
const swatches = [...greys, ...basics, ...reds, ...roses, ...mauves, ...oranges, ...browns, ...taupes, ...golds];

const tools: (string | null)[] = ['selector', 'node', null, 'rect', 'ellipse', 'star', 'box3d', 'spiral', null, 'pen', 'pencil', 'calli', 'text', null, 'gradient', 'mesh', 'dropper', 'bucket', null, 'tweak', 'spray', 'eraser', 'connector', null, 'zoom', 'measure'];

const commands: (string | null)[] = ['newDoc', 'open', 'save', 'print', null, 'import', 'export', null, 'undo', 'redo', null, 'copy', 'cut', 'paste', null, 'zoomSel', 'zoomDraw', 'zoomPage', 'zoomBorder', null, 'dup', 'clone', 'unlink', null, 'selOrig', 'selOrig2'];

const snaps: ({ n: string; on?: boolean } | null)[] = [
  { n: 'snapMain', on: true },
  null,
  { n: 'snapMain' },
  { n: 'faint1' },
  { n: 'faint2' },
  { n: 'faint3' },
  { n: 'faint4' },
  null,
  { n: 'snapMain', on: true },
  { n: 'curveArrow' },
  { n: 'cross' },
  { n: 'curveNode', on: true },
  { n: 'curveSq' },
  { n: 'slash' },
  null,
  { n: 'snapMain', on: true },
  { n: 'cornerNode' },
  { n: 'plusBox' },
  { n: 'textSnap' },
  null,
  { n: 'pageSnap' },
  { n: 'grid', on: true },
  { n: 'guides', on: true },
];

const menuTitles = ['Plik', 'Edycja', 'Widok', 'Warstwa', 'Obiekt', 'Ścieżka', 'Tekst', 'Filtry', 'Efekty', 'Pomoc'];

const TextMenu = () => (
  <Dropdown>
    <DropItem>Tekst i czcionka...<Shortcut>Shift+Ctrl+T</Shortcut></DropItem>
    <DropItem>Edytor czcionek SVG...</DropItem>
    <DropItem>Znaki Unicode...</DropItem>
    <DropSep />
    <DropItem $on>Wstaw na ścieżkę</DropItem>
    <DropItem>Zdejmij ze ścieżki</DropItem>
    <DropSep />
    <DropItem>Wprowadź tekst do kształtu<Shortcut>Alt+W</Shortcut></DropItem>
    <DropItem>Uwolnij tekst<Shortcut>Shift+Alt+W</Shortcut></DropItem>
    <DropItem>Konwertuj na zwykły tekst</DropItem>
    <DropSep />
    <DropItem>Usuń ręczne podcięcie</DropItem>
    <DropSep />
    <DropItem>Sprawdź pisownię...<Shortcut>Ctrl+Alt+K</Shortcut></DropItem>
  </Dropdown>
);

const ExportDialog = () => (
  <Dock>
    <DockTitle>
      <Icon n="dockDoc" s={17} />
      <DockTitleText>Wyeksportuj jako plik PNG (Shift+Ctrl+E)</DockTitleText>
      <DockMini $mr={25}>
        <svg width="7" height="7"><path d="M6 0v7L1 3.500z" fill="#777" /></svg>
      </DockMini>
      <DockMini $mr={2}>
        <svg width="7" height="7"><path d="M0 0l7 7M7 0L0 7" stroke="#555" strokeWidth="1.500" /></svg>
      </DockMini>
    </DockTitle>
    <DockBox>
      <Heading>Obszar eksportu</Heading>
      <SegmentRow>
        <Button>Strona</Button>
        <Button>Rysunek</Button>
        <Button $on>Zaznaczenie</Button>
        <Button>Obszar użytkownika</Button>
      </SegmentRow>
      <CoordGrid>
        <RightLabel>x0:</RightLabel>
        <SpinBox value="-51,675" />
        <RightLabel>y0:</RightLabel>
        <SpinBox value="-48,536" />
        <RightLabel>x1:</RightLabel>
        <SpinBox value="159,991" />
        <RightLabel>y1:</RightLabel>
        <SpinBox value="-13,317" />
        <RightLabel>Szerokość:</RightLabel>
        <SpinBox value="211,666" />
        <RightLabel>Wysokość:</RightLabel>
        <SpinBox value="35,219" />
      </CoordGrid>
      <UnitsRow>
        Jednostki:
        <Button $w={58}>
          mm <Arrow $ml={2} />
        </Button>
      </UnitsRow>
      <Heading $mt={6}>Rozmiar obrazka</Heading>
      <SizeGrid>
        <RightLabel>Szerokość:</RightLabel>
        <SpinBox value="800" />
        <LeftLabel>px przy</LeftLabel>
        <SpinBox value="96,00" />
        <LeftLabel>dpi</LeftLabel>
        <RightLabel>Wysokość:</RightLabel>
        <SpinBox value="133" />
        <LeftLabel>px przy</LeftLabel>
        <SpinBox value="96,00" disabled />
        <LeftLabel $dim>dpi</LeftLabel>
      </SizeGrid>
      <Heading $mt={6}>Nazwa pliku</Heading>
      <FileRow>
        <FileInput>C:\Users\kevin\text18.png</FileInput>
        <Button $w={120}>
          <Icon n="folder" s={16} />
          Eksportuj jako...
        </Button>
      </FileRow>
      <CheckRow $mt={6}><CheckBox />Eksportuj grupowo 2 wybrane elementy</CheckRow>
      <CheckRow $mt={4}><CheckBox />Ukryj wszystkie oprócz zaznaczonych</CheckRow>
      <Expander><Arrow />Zaawansowane</Expander>
      <CheckRow $mt={6} $ml={5}><CheckBox />Użyj przeplotu</CheckRow>
      <OptionGrid>
        <LeftLabel>Głębia bitowa</LeftLabel>
        <Select>RGBA_8<Arrow /></Select>
        <LeftLabel>Kompresja</LeftLabel>
        <Select>Z_DEFAULT_COMPRESSION<Arrow /></Select>
        <LeftLabel>pHYs dpi</LeftLabel>
        <SpinBox value="0,00" minusOff />
        <LeftLabel>Wygładzanie</LeftLabel>
        <Select>CAIRO_ANTIALIAS_GOOD (default)<Arrow /></Select>
      </OptionGrid>
      <DockRule />
      <FinishRow>
        <CheckRow $ml={0}><CheckBox />Zamknij po zakończeniu</CheckRow>
        <Button $w={81}>Eksportuj</Button>
      </FinishRow>
    </DockBox>
  </Dock>
);

const CallControls = () => (
  <CallBar>
    <CallBtn>
      <svg width="18" height="18" viewBox="0 0 18 18">
        <rect x="1" y="5" width="11" height="9" rx="1" fill="#fff" />
        <path d="M13 8l4-2.500v8L13 11z" fill="#fff" />
        <path d="M2 17L15 2" stroke="#000" strokeWidth="2.500" />
        <path d="M1.500 16.500L15 1.500" stroke="#fff" strokeWidth="1" />
      </svg>
    </CallBtn>
    <CallBtn>
      <svg width="18" height="18" viewBox="0 0 18 18">
        <rect x="6" y="1" width="6" height="11" rx="3" fill="#fff" />
        <path d="M3.500 8.500a5.500 5.500 0 0 0 11 0M9 14v3" fill="none" stroke="#bbb" strokeWidth="1.200" />
      </svg>
    </CallBtn>
    <CallBtn>
      <svg width="18" height="18" viewBox="0 0 18 18">
        <path d="M4 15H2.500A1.500 1.500 0 0 1 1 13.500v-10A1.500 1.500 0 0 1 2.500 2h13A1.500 1.500 0 0 1 17 3.500v10a1.500 1.500 0 0 1-1.500 1.500H14" fill="none" stroke="#aaa" strokeWidth="1.200" />
        <path d="M6.500 10.500l5 5M11.500 10.500l-5 5" stroke="#fff" strokeWidth="1.800" />
      </svg>
    </CallBtn>
    <CallBtn>
      <svg width="18" height="18" viewBox="0 0 18 18">
        <path d="M1 10c0-5 16-5 16 0v2h-4v-2c-2-1-6-1-8 0v2H1z" fill="#fff" />
      </svg>
    </CallBtn>
  </CallBar>
);

export default function App() {
  return (
    <Window>
      <GlobalStyle />
      <TitleBar>
        <Icon n="logo" s={18} />
        <TitleText>*Nowy dokument 1 - Inkscape</TitleText>
        <WinControl>
          <svg width="10" height="10"><path d="M0 5.500h10" stroke="#fff" /></svg>
        </WinControl>
        <WinControl>
          <svg width="11" height="11"><path d="M.5 2.500h8v8h-8zM2.500 2.500v-2h8v8h-2" fill="none" stroke="#fff" /></svg>
        </WinControl>
        <WinControl>
          <svg width="11" height="11"><path d="M.5.500l10 10M10.500.500l-10 10" stroke="#fff" /></svg>
        </WinControl>
      </TitleBar>
      <Frame>
        <MenuBar>
          {menuTitles.map((m) => (
            <MenuTitle key={m} $active={m === 'Tekst'}>{m}</MenuTitle>
          ))}
        </MenuBar>
        <Toolbar>
          <TopTool><Icon n="selectAll" s={18} /></TopTool>
          <TopTool><Icon n="selectLayers" s={22} /></TopTool>
          <TopTool><Icon n="selectSame" s={22} /></TopTool>
          <ToolSep $ml={7} $mr={6} />
          <TopTool $w={37.500}><Icon n="rotL" s={18} /></TopTool>
          <TopTool $w={37.500}><Icon n="rotR" s={18} /></TopTool>
          <TopTool $w={37.500}><Icon n="flipH" s={20} /></TopTool>
          <TopTool $w={37.500}><Icon n="flipV" s={18} /></TopTool>
          <ToolSep $ml={7} $mr={184} />
          <SpinBox value="-51,675" w={115} />
          <FieldLabel $w={20} $pl={7}>Y:</FieldLabel>
          <SpinBox value="-183,444" w={115} />
          <FieldLabel $w={38} $pl={7}>Szer.:</FieldLabel>
          <SpinBox value="799,999" w={111} />
          <TopTool $w={45}><Icon n="lockOpen" s={22} /></TopTool>
          <FieldLabel $w={31}>Wys.:</FieldLabel>
          <SpinBox value="133,111" w={111} />
          <Button $w={59} $ml={5} $gap={12}>px<Arrow /></Button>
          <ToolSep $ml={8} $mr={7} />
          <ToggleBtn><Icon n="scale1" s={22} /></ToggleBtn>
          <ToggleBtn><Icon n="scale2" s={22} /></ToggleBtn>
          <ToggleBtn><Icon n="scale3" s={22} /></ToggleBtn>
          <ToggleBtn><Icon n="scale4" s={22} /></ToggleBtn>
        </Toolbar>
        <Workspace>
          <ToolColumn $w={49} $top={3} $left>
            {tools.map((t, i) =>
              t ? (
                <ToolCell key={i} $on={t === 'selector'}>
                  <Icon n={t} s={t === 'selector' ? 24 : 23} />
                </ToolCell>
              ) : (
                <ToolDivider key={i} />
              )
            )}
          </ToolColumn>
          <CanvasArea>
            <LockCell><Icon n="lockClosed" s={13} /></LockCell>
            <RulerBox><TopRuler /></RulerBox>
            <PageCell>
              <svg width="11" height="11"><path d="M1.500 1.500h8v8h-8zM4 3.500l2-1v6" fill="none" stroke="#666" /></svg>
            </PageCell>
            <RulerBox><LeftRuler /></RulerBox>
            <Canvas>
              <PageOutline />
              <Artwork />
            </Canvas>
            <VScroll><VThumb /></VScroll>
            <GridBlank />
            <HScroll><HThumb $w={560} /></HScroll>
            <ColorCorner />
          </CanvasArea>
          <ExportDialog />
          <ToolColumn $w={50} $top={3.500}>
            {commands.map((c, i) =>
              c ? (
                <ToolCell key={i} $w={36} $h={35}><Icon n={c} /></ToolCell>
              ) : (
                <ToolDivider key={i} $w={36} />
              )
            )}
          </ToolColumn>
          <ToolColumn $w={37} $top={4}>
            {snaps.map((s, i) =>
              s ? (
                <ToolCell key={i} $w={36} $h={35} $on={s.on}><Icon n={s.n} s={22} /></ToolCell>
              ) : (
                <ToolDivider key={i} $w={36} />
              )
            )}
          </ToolColumn>
        </Workspace>
        <Palette>
          <NoColor>
            <svg width="16" height="21"><path d="M0 0l16 21M16 0L0 21" stroke="#7a1a1a" strokeWidth="1.200" /></svg>
          </NoColor>
          {swatches.map((c, i) => (
            <Swatch key={i} $c={c} />
          ))}
        </Palette>
        <PaletteScroll><HThumb $w={425} /></PaletteScroll>
        <StatusBar>
          <StyleInfo>
            <span>Wypełnienie:</span><span>Różne</span>
            <span>Kontur:</span><span>Różne 0,270</span>
          </StyleInfo>
          <FieldLabel $w={11.500}>K:</FieldLabel>
          <SpinBox value="100" w={67} plusOff />
          <StatusSep $ml={3} />
          <StatusIcon $w={39}><Icon n="eye" s={21} /></StatusIcon>
          <StatusIcon $w={33}><Icon n="lockOpen" s={21} /></StatusIcon>
          <LayerCombo>•Warstwa 1<Arrow $ml={6} /></LayerCombo>
          <StatusText>Wstawia tekst na ścieżkę</StatusText>
          <StatusSep />
          <CoordInfo>
            <span>X:</span><span>-</span>
            <span>Y:</span><span>-82,63</span>
          </CoordInfo>
          <FieldLabel $w={21}>Z:</FieldLabel>
          <SpinBox value="96%" w={92} pad={12} />
          <FieldLabel $w={31} $pl={5}>R:</FieldLabel>
          <SpinBox value="0,00" w={100} pad={17} />
        </StatusBar>
      </Frame>
      <TextMenu />
      <Meeting>
        <MeetingHead>
          <MeetingTitle>Spotkanie na kanale General</MeetingTitle>
          <MeetingTime>41:34</MeetingTime>
          <MeetingHide />
        </MeetingHead>
        <Avatar>PK</Avatar>
        <CallControls />
      </Meeting>
    </Window>
  );
}
